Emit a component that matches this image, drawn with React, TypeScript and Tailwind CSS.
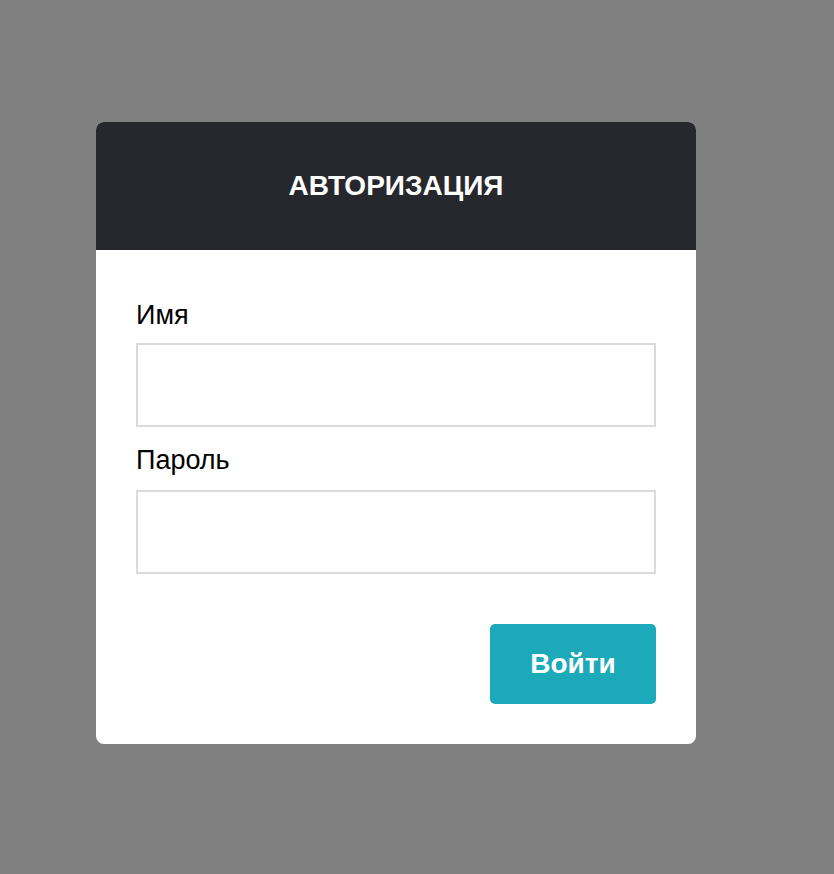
export default function App() {
    return (
        <div className="min-h-[874px] w-full bg-[#808080] pt-[122px] pl-[96px]" style={{ fontFamily: '"Liberation Sans", Arial, sans-serif' }}>
            <div className="w-[600px] overflow-hidden rounded-lg bg-white">
                <div className="flex h-[128px] items-center justify-center bg-[#27282d]">
                    <h1 className="text-[28px] font-bold leading-none text-white">АВТОРИЗАЦИЯ</h1>
                </div>
                <form className="px-10 pt-[50px] pb-10" onSubmit={(e) => e.preventDefault()}>
                    <label className="block text-[27px] leading-[31px] text-black">Имя</label>
                    <input
                        type="text"
                        className="mt-[12px] block h-[84px] w-full border-2 border-[#dadada] bg-white px-3 text-lg outline-none"
                    />
                    <label className="mt-[18px] block text-[27px] leading-[31px] text-black">Пароль</label>
                    <input
                        type="password"
                        className="mt-[14px] block h-[84px] w-full border-2 border-[#dadada] bg-white px-3 text-lg outline-none"
                    />
                    <div className="mt-[50px] flex justify-end">
                        <button
                            type="submit"
                            className="h-[80px] w-[166px] rounded-[5px] bg-[#1ca9b9] text-[28px] font-bold text-white"
                        >
                            Войти
                        </button>
                    </div>
                </form>
            </div>
        </div>
    );
}
